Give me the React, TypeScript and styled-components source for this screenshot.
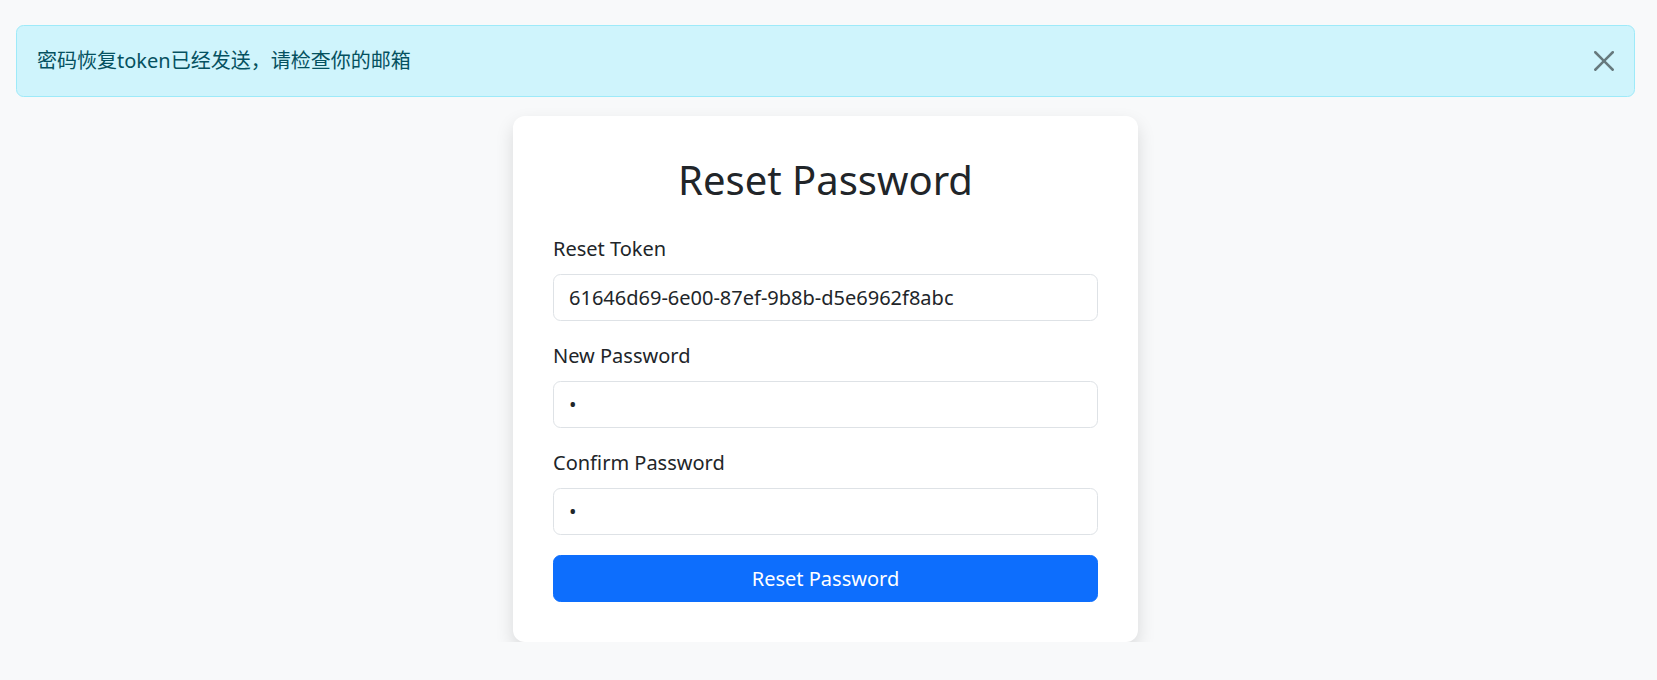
import React from 'react';
import styled, { createGlobalStyle } from 'styled-components';

const GlobalStyle = createGlobalStyle`
  html, body {
    margin: 0;
    padding: 0;
    background: #f8f9fa;
    color: #212529;
    font-family: 'Noto Sans', 'Noto Sans CJK SC', sans-serif;
    font-size: 20px;
    line-height: 1.5;
  }
  * {
    box-sizing: border-box;
  }
`;

const Page = styled.div`
  margin: 25px 22px 0 16px;
`;

const Alert = styled.div`
  position: relative;
  padding: 20px 60px 20px 20px;
  margin-bottom: 19px;
  color: #055160;
  background: #cff4fc;
  border: 1px solid #9eeaf9;
  border-radius: 7.5px;
  font-size: 20px;
  line-height: 30px;
`;

const CloseButton = styled.button`
  position: absolute;
  top: 0;
  right: 0;
  box-sizing: content-box;
  width: 20px;
  height: 20px;
  padding: 25px 20px;
  border: 0;
  background: transparent;
  opacity: 0.5;
  cursor: pointer;
  display: flex;
  align-items: center;
  justify-content: center;

  svg {
    display: block;
  }
`;

const Card = styled.div`
  width: 625px;
  margin: 0 auto;
  padding: 40px;
  background: #fff;
  border-radius: 12px;
  box-shadow: 0 8px 18px rgba(0, 0, 0, 0.13);
`;

const Title = styled.h1`
  margin: 0 0 30px;
  font-size: 40px;
  font-weight: 400;
  line-height: 48px;
  text-align: center;
  color: #212529;
`;

const Field = styled.div`
  margin-bottom: 20px;
`;

const Label = styled.label`
  display: block;
  margin-bottom: 10px;
  font-size: 20px;
  line-height: 30px;
`;

const Input = styled.input`
  display: block;
  width: 100%;
  height: 47px;
  padding: 7.5px 15px;
  font-family: inherit;
  font-size: 20px;
  line-height: 30px;
  color: #212529;
  background: #fff;
  border: 1px solid #dee2e6;
  border-radius: 7.5px;
  outline: none;
`;

const Submit = styled.button`
  display: block;
  width: 100%;
  height: 47px;
  padding: 7.5px 15px;
  font-family: inherit;
  font-size: 20px;
  line-height: 30px;
  color: #fff;
  background: #0d6efd;
  border: 1px solid #0d6efd;
  border-radius: 7.5px;
  cursor: pointer;
`;

const CloseIcon = () => (
  <svg width="20" height="20" viewBox="0 0 16 16" fill="#000">
    <path d="M.293.293a1 1 0 0 1 1.414 0L8 6.586 14.293.293a1 1 0 1 1 1.414 1.414L9.414 8l6.293 6.293a1 1 0 0 1-1.414 1.414L8 9.414l-6.293 6.293a1 1 0 0 1-1.414-1.414L6.586 8 .293 1.707a1 1 0 0 1 0-1.414z" />
  </svg>
);

const App = () => {
  return (
    <>
      <GlobalStyle />
      <Page>
        <Alert>
          密码恢复token已经发送，请检查你的邮箱
          <CloseButton aria-label="Close">
            <CloseIcon />
          </CloseButton>
        </Alert>
        <Card>
          <Title>Reset Password</Title>
          <Field>
            <Label htmlFor="token">Reset Token</Label>
            <Input id="token" type="text" readOnly value="61646d69-6e00-87ef-9b8b-d5e6962f8abc" />
          </Field>
          <Field>
            <Label htmlFor="pw">New Password</Label>
            <Input id="pw" type="password" readOnly value="a" />
          </Field>
          <Field>
            <Label htmlFor="pw2">Confirm Password</Label>
            <Input id="pw2" type="password" readOnly value="a" />
          </Field>
          <Submit type="button">Reset Password</Submit>
        </Card>
      </Page>
    </>
  );
};

export default App;
